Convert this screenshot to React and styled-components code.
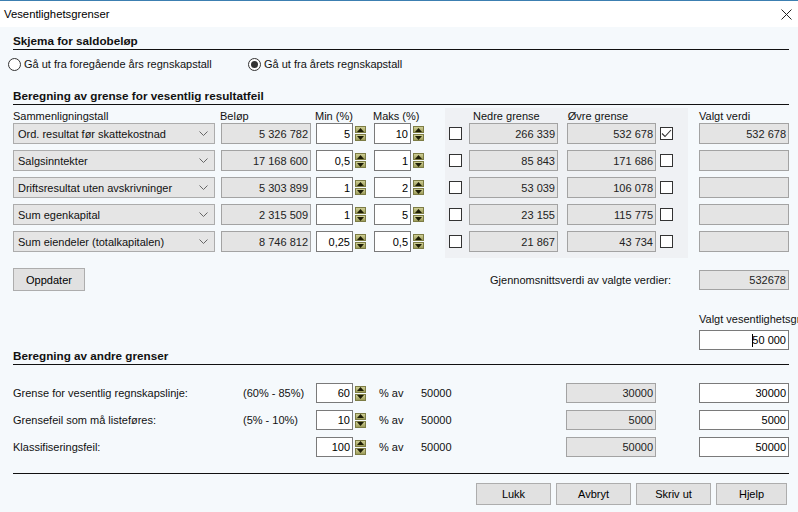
import { Fragment } from "react";
import styled, { createGlobalStyle } from "styled-components";

const GlobalStyle = createGlobalStyle`
  html, body {
    margin: 0;
    padding: 0;
    background: #f5f9fc;
  }
  * {
    box-sizing: border-box;
  }
`;

const Window = styled.div`
  width: 798px;
  height: 512px;
  overflow: hidden;
  background: #f5f9fc;
  font-family: "Liberation Sans", Arial, sans-serif;
  font-size: 11px;
  color: #111;
`;

const TitleBar = styled.div`
  height: 27px;
  border-top: 1px solid #3c7fb1;
  background: #fff;
  display: flex;
  align-items: center;
  justify-content: space-between;
  padding: 0 6px 0 4px;
`;

const Title = styled.span`
  font-size: 11.3px;
  line-height: 26px;
  color: #000;
`;

const Body = styled.div`
  display: flex;
  flex-direction: column;
  padding: 7px 9px 0 13px;
`;

const SectionHeader = styled.div`
  font-size: 11.7px;
  font-weight: 700;
  line-height: 14px;
  padding-bottom: 1px;
  border-bottom: 1px solid #111;
  margin-top: ${(p) => p.$top || 0}px;
`;

const RadioRow = styled.div`
  display: flex;
  align-items: center;
  height: 14px;
  margin: 7px 0 0 -5px;
`;

const RadioLabel = styled.label`
  display: flex;
  align-items: center;
  gap: 3px;
  width: ${(p) => p.$width || "auto"};
  line-height: 14px;
`;

const RadioCircle = styled.span`
  width: 13px;
  height: 13px;
  border-radius: 50%;
  border: 1px solid #333;
  background: #fff;
  display: flex;
  align-items: center;
  justify-content: center;

  &::after {
    content: "";
    width: 7px;
    height: 7px;
    border-radius: 50%;
    background: ${(p) => (p.$checked ? "#333" : "transparent")};
  }
`;

const CalcArea = styled.div`
  display: flex;
  margin-top: 3px;
`;

const rowsTemplate = "15px repeat(5, 27px)";

const LeftGrid = styled.div`
  display: grid;
  grid-template-columns: 208px 95px 58px 71px;
  grid-template-rows: ${rowsTemplate};
  align-items: start;
`;

const Panel = styled.div`
  width: 243px;
  margin-right: 11px;
  background: #eff1f4;
  display: grid;
  grid-template-rows: ${rowsTemplate};
  align-items: start;
  padding-left: 4px;
`;

const RightCol = styled.div`
  width: 90px;
  display: grid;
  grid-template-rows: ${rowsTemplate};
  align-items: start;
`;

const ColHead = styled.div`
  align-self: end;
  line-height: 13px;
  white-space: nowrap;
  margin-left: ${(p) => p.$indent || 0}px;
`;

const PanelHead = styled.div`
  align-self: end;
  display: flex;
`;

const SelectBox = styled.div`
  width: 202px;
  height: 21px;
  background: #e5e5e5;
  border: 1px solid #acacac;
  display: flex;
  align-items: center;
  justify-content: space-between;
  padding: 0 6px 0 4px;
  white-space: nowrap;
`;

const ReadField = styled.div`
  width: ${(p) => p.$width || 90}px;
  height: ${(p) => p.$height || 21}px;
  margin-left: ${(p) => p.$gap || 0}px;
  background: #e4e4e4;
  border: 1px solid #a3a3a3;
  display: flex;
  align-items: center;
  justify-content: flex-end;
  padding-right: 2px;
  color: #222;
`;

const InputField = styled.div`
  width: ${(p) => p.$width || 37}px;
  height: ${(p) => p.$height || 21}px;
  background: #fff;
  border: 1px solid #7a7a7a;
  display: flex;
  align-items: center;
  justify-content: flex-end;
  padding-right: 2px;
  color: #000;
`;

const Caret = styled.span`
  display: inline-block;
  width: 1px;
  height: 13px;
  background: #000;
  margin-right: -1px;
`;

const SpinGroup = styled.div`
  display: flex;
  align-items: center;
  gap: 2px;
`;

const Spin = styled.div`
  display: flex;
  flex-direction: column;
  gap: 1px;
  width: 11px;
`;

const SpinBtn = styled.div`
  height: 7px;
  background: linear-gradient(#cfcf95, #9c9c5a);
  border: 1px solid #7c7c44;
  display: flex;
  align-items: center;
  justify-content: center;
`;

const PanelRow = styled.div`
  height: 21px;
  display: flex;
  align-items: center;
`;

const Check = styled.span`
  width: 13px;
  height: 13px;
  border: 1px solid #333;
  background: #fff;
  display: flex;
  align-items: center;
  justify-content: center;
  margin: 0 ${(p) => p.$right || 0}px 0 ${(p) => p.$left || 0}px;
`;

const UpdateRow = styled.div`
  display: flex;
  align-items: center;
  margin-top: 10px;
`;

const Button = styled.button`
  width: ${(p) => p.$width || 75}px;
  height: ${(p) => p.$height || 22}px;
  background: #e1e1e1;
  border: 1px solid #adadad;
  font-family: inherit;
  font-size: 11px;
  color: #000;
  padding: 0;
`;

const AvgLabel = styled.span`
  margin-left: auto;
  margin-right: 28px;
`;

const ChosenBlock = styled.div`
  align-self: flex-end;
  width: 90px;
  margin-top: 22px;
  display: flex;
  flex-direction: column;
  gap: 4px;
`;

const ChosenLabel = styled.span`
  line-height: 13px;
  white-space: nowrap;
`;

const OtherGrid = styled.div`
  display: grid;
  grid-template-columns: 230px 73px 63px 42px 145px 133px 90px;
  grid-auto-rows: 20px;
  row-gap: 7px;
  align-items: center;
  margin-top: 18px;
`;

const Footer = styled.div`
  margin-top: 16px;
  border-top: 1px solid #111;
  display: flex;
  justify-content: flex-end;
  gap: 5px;
  padding: 9px 2px 0 0;
`;

const Chevron = () => (
  <svg width="9" height="6" viewBox="0 0 9 6">
    <polyline points="0.5,0.5 4.5,4.5 8.5,0.5" fill="none" stroke="#666" strokeWidth="1" />
  </svg>
);

const Spinner = () => (
  <Spin>
    <SpinBtn>
      <svg width="7" height="4" viewBox="0 0 7 4">
        <polygon points="0,4 3.5,0 7,4" fill="#1c1c05" />
      </svg>
    </SpinBtn>
    <SpinBtn>
      <svg width="7" height="4" viewBox="0 0 7 4">
        <polygon points="0,0 3.5,4 7,0" fill="#1c1c05" />
      </svg>
    </SpinBtn>
  </Spin>
);

const CheckBox = ({ checked, ...rest }) => (
  <Check {...rest}>
    {checked && (
      <svg width="11" height="9" viewBox="0 0 11 9">
        <polyline points="1,4.5 4,7.5 10,1" fill="none" stroke="#333" strokeWidth="1.1" />
      </svg>
    )}
  </Check>
);

const rows = [
  { name: "Ord. resultat før skattekostnad", amount: "5 326 782", min: "5", max: "10", low: "266 339", high: "532 678", picked: "532 678" },
  { name: "Salgsinntekter", amount: "17 168 600", min: "0,5", max: "1", low: "85 843", high: "171 686" },
  { name: "Driftsresultat uten avskrivninger", amount: "5 303 899", min: "1", max: "2", low: "53 039", high: "106 078" },
  { name: "Sum egenkapital", amount: "2 315 509", min: "1", max: "5", low: "23 155", high: "115 775" },
  { name: "Sum eiendeler (totalkapitalen)", amount: "8 746 812", min: "0,25", max: "0,5", low: "21 867", high: "43 734" },
];

const others = [
  { label: "Grense for vesentlig regnskapslinje:", range: "(60% - 85%)", pct: "60", calc: "30000", value: "30000" },
  { label: "Grensefeil som må listeføres:", range: "(5% - 10%)", pct: "10", calc: "5000", value: "5000" },
  { label: "Klassifiseringsfeil:", range: "", pct: "100", calc: "50000", value: "50000" },
];

export default function App() {
  return (
    <Window>
      <GlobalStyle />
      <TitleBar>
        <Title>Vesentlighetsgrenser</Title>
        <svg width="11" height="11" viewBox="0 0 11 11">
          <path d="M0.5 0.5 L10.5 10.5 M10.5 0.5 L0.5 10.5" stroke="#222" strokeWidth="1" />
        </svg>
      </TitleBar>

      <Body>
        <SectionHeader>Skjema for saldobeløp</SectionHeader>
        <RadioRow>
          <RadioLabel $width="240px">
            <RadioCircle />
            Gå ut fra foregående års regnskapstall
          </RadioLabel>
          <RadioLabel>
            <RadioCircle $checked />
            Gå ut fra årets regnskapstall
          </RadioLabel>
        </RadioRow>

        <SectionHeader $top={18}>Beregning av grense for vesentlig resultatfeil</SectionHeader>
        <CalcArea>
          <LeftGrid>
            <ColHead>Sammenligningstall</ColHead>
            <ColHead $indent={-1}>Beløp</ColHead>
            <ColHead $indent={-1}>Min (%)</ColHead>
            <ColHead $indent={-1}>Maks (%)</ColHead>
            {rows.map((r) => (
              <Fragment key={r.name}>
                <SelectBox>
                  {r.name}
                  <Chevron />
                </SelectBox>
                <ReadField>{r.amount}</ReadField>
                <SpinGroup>
                  <InputField>{r.min}</InputField>
                  <Spinner />
                </SpinGroup>
                <SpinGroup>
                  <InputField>{r.max}</InputField>
                  <Spinner />
                </SpinGroup>
              </Fragment>
            ))}
          </LeftGrid>

          <Panel>
            <PanelHead>
              <ColHead $indent={24}>Nedre grense</ColHead>
              <ColHead $indent={28}>Øvre grense</ColHead>
            </PanelHead>
            {rows.map((r) => (
              <PanelRow key={r.name}>
                <CheckBox $right={7} />
                <ReadField $width={89}>{r.low}</ReadField>
                <ReadField $width={89} $gap={9}>{r.high}</ReadField>
                <CheckBox $left={4} checked={!!r.picked} />
              </PanelRow>
            ))}
          </Panel>

          <RightCol>
            <ColHead>Valgt verdi</ColHead>
            {rows.map((r) => (
              <ReadField key={r.name}>{r.picked || ""}</ReadField>
            ))}
          </RightCol>
        </CalcArea>

        <UpdateRow>
          <Button $width={72} $height={23}>Oppdater</Button>
          <AvgLabel>Gjennomsnittsverdi av valgte verdier:</AvgLabel>
          <ReadField $height={20}>532678</ReadField>
        </UpdateRow>

        <ChosenBlock>
          <ChosenLabel>Valgt vesentlighetsgrense</ChosenLabel>
          <InputField $width={90} $height={20}>
            <Caret />
            50 000
          </InputField>
        </ChosenBlock>

        <SectionHeader $top={-1}>Beregning av andre grenser</SectionHeader>
        <OtherGrid>
          {others.map((o) => (
            <Fragment key={o.label}>
              <span>{o.label}</span>
              <span>{o.range}</span>
              <SpinGroup>
                <InputField $height={20}>{o.pct}</InputField>
                <Spinner />
              </SpinGroup>
              <span>% av</span>
              <span>50000</span>
              <ReadField $height={20}>{o.calc}</ReadField>
              <InputField $width={90} $height={20}>{o.value}</InputField>
            </Fragment>
          ))}
        </OtherGrid>

        <Footer>
          <Button>Lukk</Button>
          <Button>Avbryt</Button>
          <Button>Skriv ut</Button>
          <Button $width={71}>Hjelp</Button>
        </Footer>
      </Body>
    </Window>
  );
}
